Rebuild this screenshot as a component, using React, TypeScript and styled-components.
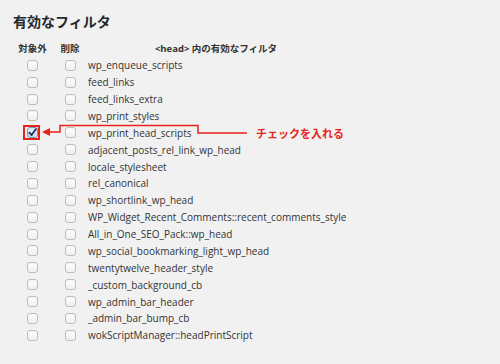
import React from "react";
import styled, { createGlobalStyle } from "styled-components";

const Global = createGlobalStyle`
  html, body { margin: 0; padding: 0; background: #f1f1f1; }
  body { font-family: "Open Sans", "Noto Sans CJK JP", sans-serif; }
`;

const Page = styled.div`
  position: relative;
  width: 500px;
  height: 364px;
  box-sizing: border-box;
  padding: 12px 0 0 13px;
  background: #f1f1f1;
  color: #333;
  overflow: hidden;
`;

const Title = styled.h2`
  margin: 0 0 9px 0;
  font-family: "Noto Sans CJK JP", sans-serif;
  font-size: 14px;
  line-height: 19px;
  font-weight: 700;
  color: #23282d;
`;

const Table = styled.div`
  display: grid;
  grid-template-columns: 39px 36px 256px;
  grid-auto-rows: 16.875px;
  align-items: center;
`;

const Th = styled.div`
  font-family: "Open Sans", "Noto Sans CJK JP", sans-serif;
  font-size: 9.5px;
  font-weight: 700;
  color: #333;
  text-align: center;
  white-space: nowrap;
`;

const Cell = styled.div`
  display: flex;
  justify-content: center;
  align-items: center;
`;

const Name = styled.div`
  font-size: 10px;
  color: #333;
  white-space: nowrap;
`;

const Box = styled.span<{ $checked?: boolean }>`
  display: inline-flex;
  align-items: center;
  justify-content: center;
  box-sizing: border-box;
  width: 11px;
  height: 11px;
  border: 1px solid ${(p) => (p.$checked ? "#7d93b3" : "#bdbdbd")};
  border-radius: 3px;
  background: ${(p) =>
    p.$checked
      ? "linear-gradient(#e7f0fb, #c9dbf1)"
      : "linear-gradient(#ffffff, #efefef)"};
  box-shadow: inset 0 1px 1px rgba(0, 0, 0, 0.04);
`;

const Highlight = styled.div`
  position: absolute;
  left: 23px;
  top: 125px;
  width: 17px;
  height: 15px;
  box-sizing: border-box;
  border: 2px solid #e8231a;
`;

const Overlay = styled.svg`
  position: absolute;
  left: 0;
  top: 0;
  pointer-events: none;
`;

const Note = styled.span`
  position: absolute;
  left: 256px;
  top: 125px;
  font-family: "Noto Sans CJK JP", sans-serif;
  font-size: 11px;
  line-height: 16px;
  font-weight: 700;
  color: #e8231a;
  white-space: nowrap;
`;

const filters = [
  "wp_enqueue_scripts",
  "feed_links",
  "feed_links_extra",
  "wp_print_styles",
  "wp_print_head_scripts",
  "adjacent_posts_rel_link_wp_head",
  "locale_stylesheet",
  "rel_canonical",
  "wp_shortlink_wp_head",
  "WP_Widget_Recent_Comments::recent_comments_style",
  "All_in_One_SEO_Pack::wp_head",
  "wp_social_bookmarking_light_wp_head",
  "twentytwelve_header_style",
  "_custom_background_cb",
  "wp_admin_bar_header",
  "_admin_bar_bump_cb",
  "wokScriptManager::headPrintScript",
];

const Check = () => (
  <svg width="9" height="9" viewBox="0 0 10 10">
    <path d="M1.5 5.2 L4 7.8 L8.8 1.2" fill="none" stroke="#1c3566" strokeWidth="2" strokeLinecap="round" strokeLinejoin="round" />
  </svg>
);

export default function App() {
  return (
    <>
      <Global />
      <Page>
        <Title>有効なフィルタ</Title>
        <Table>
          <Th>対象外</Th>
          <Th>削除</Th>
          <Th>&lt;head&gt; 内の有効なフィルタ</Th>
          {filters.map((f, i) => (
            <React.Fragment key={f}>
              <Cell>
                <Box $checked={i === 4}>{i === 4 && <Check />}</Box>
              </Cell>
              <Cell>
                <Box />
              </Cell>
              <Name>{f}</Name>
            </React.Fragment>
          ))}
        </Table>
        <Highlight />
        <Overlay width="500" height="364" viewBox="0 0 500 364">
          <polyline
            points="48,132 60,132 60,125.5 198,125.5 198,133 247,133"
            fill="none"
            stroke="#e8231a"
            strokeWidth="1.5"
          />
          <polygon points="42,132 50,128 50,136" fill="#e8231a" />
        </Overlay>
        <Note>チェックを入れる</Note>
      </Page>
    </>
  );
}
